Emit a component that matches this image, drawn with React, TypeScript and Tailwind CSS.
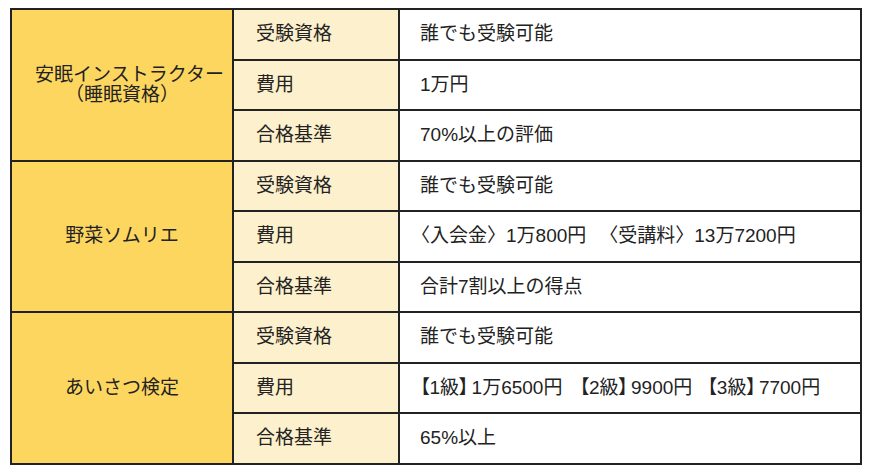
import React from "react";

type Group = {
  name: React.ReactNode;
  rows: [string, React.ReactNode][];
};

const Gap = () => <span className="inline-block w-[13px]" />;

const GROUPS: Group[] = [
  {
    name: (
      <>
        <span className="pl-[15px]">安眠インストラクター</span>
        <br />
        （睡眠資格）
      </>
    ),
    rows: [
      ["受験資格", "誰でも受験可能"],
      ["費用", "1万円"],
      ["合格基準", "70%以上の評価"],
    ],
  },
  {
    name: "野菜ソムリエ",
    rows: [
      ["受験資格", "誰でも受験可能"],
      [
        "費用",
        <span className="-ml-[9px]">
          〈入会金〉1万800円
          <Gap />
          〈受講料〉13万7200円
        </span>,
      ],
      ["合格基準", "合計7割以上の得点"],
    ],
  },
  {
    name: "あいさつ検定",
    rows: [
      ["受験資格", "誰でも受験可能"],
      [
        "費用",
        <span className="[font-feature-settings:'palt']">
          【1級<span className="mr-[3px]">】</span>1万6500円
          <span className="inline-block w-[17px]" />
          【2級<span className="mr-[3px]">】</span>9900円
          <span className="inline-block w-[15px]" />
          【3級<span className="mr-[3px]">】</span>7700円
        </span>,
      ],
      ["合格基準", "65%以上"],
    ],
  },
];

export default function App() {
  return (
    <div
      className="w-[870px] h-[473px] bg-white pt-[8px] pl-[10px] text-[#222] text-[19px]"
      style={{ fontFamily: '"Liberation Sans", "Noto Sans CJK JP", sans-serif' }}
    >
      <table className="w-[850px] h-[455px] table-fixed border-collapse border-2 border-[#222]">
        <colgroup>
          <col className="w-[222px]" />
          <col className="w-[166px]" />
          <col className="w-[462px]" />
        </colgroup>
        <tbody>
          {GROUPS.map((g, gi) =>
            g.rows.map(([label, value], ri) => (
              <tr key={`${gi}-${ri}`} className="h-[50.5px]">
                {ri === 0 && (
                  <td
                    rowSpan={3}
                    className="border-2 border-[#222] bg-[#fdd660] text-center align-middle leading-[20px]"
                  >
                    {g.name}
                  </td>
                )}
                <td className="border-2 border-[#222] bg-[#fdf0cd] pl-[22px] align-middle">
                  {label}
                </td>
                <td className="border-2 border-[#222] bg-white pl-[20px] align-middle whitespace-nowrap">
                  {value}
                </td>
              </tr>
            ))
          )}
        </tbody>
      </table>
    </div>
  );
}
